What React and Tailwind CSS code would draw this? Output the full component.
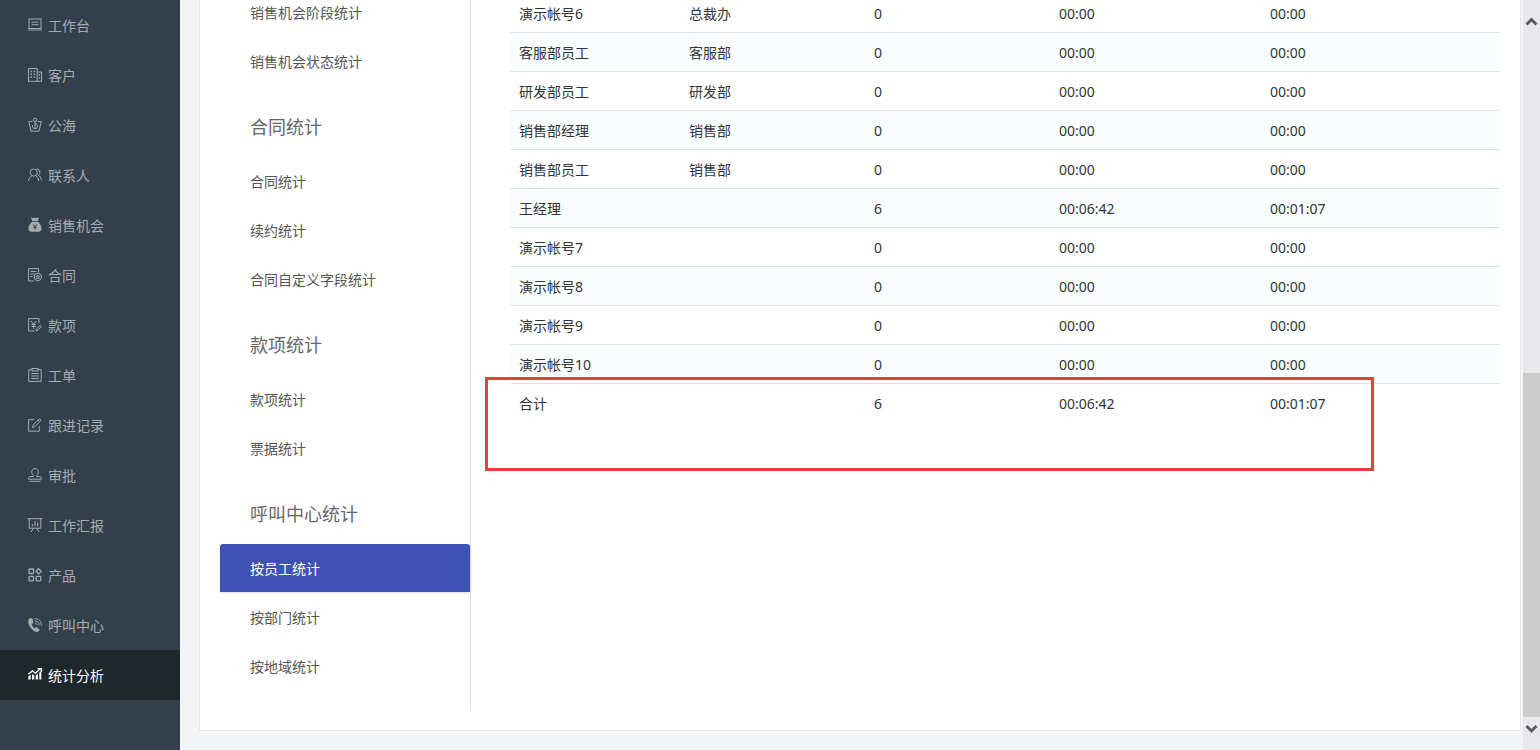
import React from "react";
import clsx from "clsx";

// Sidebar icons, all drawn on a 14x14 grid
const icons = {
  desk: (
    <>
      <rect x="1" y="1" width="12" height="9.5" />
      <path d="M3.5 4.2h7M3.5 6.7h7M0 12h14" />
    </>
  ),
  building: (
    <>
      <path d="M.5 13V.5h8.700V13M9.200 4h4.300v9M0 13.300h14" />
      <path d="M2.500 3.500h1.500M5.700 3.500h1.500M2.500 6.200h1.500M5.700 6.200h1.500M2.500 9h1.500M5.700 9h1.500M10.700 7h1.300M10.700 10h1.300" strokeWidth="1.400" />
    </>
  ),
  sea: (
    <>
      <path d="M4.300 3.500H.700L3 13.200h8L13.300 3.500H9.700" />
      <circle cx="7" cy="1.800" r="1.700" />
      <path d="M7 3.800v6.700M4.700 7v2.200c0 .8.800 1.300 2.300 1.300s2.300-.5 2.300-1.300V7M7 6h2.300" />
    </>
  ),
  contact: (
    <>
      <circle cx="5.700" cy="4.500" r="3.600" />
      <path d="M.6 13c.2-3 1.700-4.500 3.200-5M7.700 8c1.500.6 2.800 2 3 5M8.700 1c2 .1 3.200 1.500 3.200 3.300 0 1.500-.8 2.600-1.700 3 1.600.7 2.900 2.200 3.200 4.700" />
    </>
  ),
  bag: (
    <>
      <path
        d="M3 0c1-.5 2 .3 2.700 0C6.500-.4 7.500-.4 8.200 0c.8.200 1.800-.5 2.800 0L9.700 3H4.300ZM4.300 3.800h5.400c2.200 1.500 3.800 4 3.800 6.600 0 2.200-1.200 3.300-3 3.300h-7c-1.800 0-3-1.100-3-3.300 0-2.600 1.600-5.100 3.800-6.600Z"
        fill="currentColor"
        stroke="none"
      />
      <path d="m5 6.300 2 2.400 2-2.400M7 8.700v3M5.300 9.300h3.400" stroke="#333f4b" />
    </>
  ),
  contract: (
    <>
      <path d="M5.500 13H.6V.6h10v3.700M2.500 3.500h6M2.500 6h4M2.500 8.500h2" />
      <circle cx="9.800" cy="9" r="3.700" />
      <path d="m9.800 7.200.6 1.200 1.300.2-1 .9.300 1.300-1.200-.6-1.200.6.300-1.300-1-.9 1.300-.2Z" />
    </>
  ),
  payment: (
    <>
      <path d="M11 5V.6H.6V13h6M3 3l2.600 3.200L8.300 3M5.600 6.200v4.600M3.500 6.500h4.300M3.500 8.500h4.300" />
      <path d="m8 13 .4-2 4-3.800 1.200 1.300-4 3.900Z" />
    </>
  ),
  ticket: (
    <>
      <path d="M4 1.700H.8v11.700h12.400V1.700H10" />
      <rect x="4" y=".5" width="6" height="2.500" />
      <path d="M3.300 5.500h7.400M3.300 8h7.400M3.300 10.500h7.400" />
    </>
  ),
  record: (
    <>
      <path d="M6.500 1.700H.6v11.500h10.700V8" />
      <path d="m4.500 9.500.7-2.500L11.500.7l1.700 1.500-6.400 6.500ZM10 2.200l1.600 1.500" />
    </>
  ),
  stamp: (
    <>
      <path d="M5.500 8.500c.3-1.500-1.800-2.200-1.800-4.500C3.700 2 5 .6 7 .6S10.300 2 10.300 4c0 2.300-2.100 3-1.800 4.500h3.300c1 0 1.600.6 1.600 1.500v1.200H.6V10c0-.9.600-1.500 1.600-1.500Z" />
      <path d="M1.500 13.300h11" />
    </>
  ),
  board: (
    <>
      <path d="M-.5.700h15M1.200.7v9.500h11.600V.7M5.300 10.200 3 14M8.700 10.200 11 14" />
      <path d="M4.300 6v2.500M7 3v5.500M9.700 4.700v3.800" />
    </>
  ),
  product: (
    <g strokeWidth="1.300">
      <rect x="1" y="1" width="4.500" height="4.500" rx=".5" />
      <rect x="1" y="8.300" width="4.500" height="4.500" rx=".5" />
      <rect x="8.300" y="8.300" width="4.500" height="4.500" rx=".5" />
      <path d="m10.600.7 2.700 2.600-2.700 2.600L8 3.300Z" />
    </g>
  ),
  call: (
    <>
      <path
        d="M2.300.3C1 .7.300 2 .4 3.800c.3 4.500 4 9 7.800 9.900 1.300.3 2.500-.3 3-1.500.2-.4 0-.8-.3-1.100L8.600 9.600c-.4-.3-.9-.2-1.200.1l-.8.800C4.900 9.400 3.900 7.700 3.500 5.800l1.200-.5c.4-.2.6-.6.500-1L4.400 1C4.200.3 3.400 0 2.300.300Z"
        fill="currentColor"
        stroke="currentColor"
        strokeWidth=".4"
      />
      <path d="M6.700.700c4.200-.2 6.800 2.600 6.600 7M6.800 2.900c2.700-.1 4.500 1.600 4.300 4.400M7 5.100c1.300 0 2 .8 1.900 2" />
    </>
  ),
  chart: (
    <>
      <path
        d="M.3 8.500 2.700 6.500v5H.3ZM4 6l2.300 1.600v3.900H4ZM7.700 7.600 10 5.500v6H7.700ZM11.300 4.500l2-1.500v8.500h-2Z"
        fill="currentColor"
        stroke="none"
      />
      <path d="m.3 6.300 4.200-3.300 3 2.200L12.300.8M9.500.6h3.900v3.400" strokeWidth="1.400" />
    </>
  ),
};

const menu = [
  { label: "工作台", icon: "desk" },
  { label: "客户", icon: "building" },
  { label: "公海", icon: "sea" },
  { label: "联系人", icon: "contact" },
  { label: "销售机会", icon: "bag" },
  { label: "合同", icon: "contract" },
  { label: "款项", icon: "payment" },
  { label: "工单", icon: "ticket" },
  { label: "跟进记录", icon: "record" },
  { label: "审批", icon: "stamp" },
  { label: "工作汇报", icon: "board" },
  { label: "产品", icon: "product" },
  { label: "呼叫中心", icon: "call" },
  { label: "统计分析", icon: "chart", active: true },
];

const groups = [
  { items: ["销售机会阶段统计", "销售机会状态统计"] },
  { title: "合同统计", items: ["合同统计", "续约统计", "合同自定义字段统计"] },
  { title: "款项统计", items: ["款项统计", "票据统计"] },
  { title: "呼叫中心统计", items: ["按员工统计", "按部门统计", "按地域统计"] },
];

const rows = [
  ["演示帐号6", "总裁办", "0", "00:00", "00:00"],
  ["客服部员工", "客服部", "0", "00:00", "00:00"],
  ["研发部员工", "研发部", "0", "00:00", "00:00"],
  ["销售部经理", "销售部", "0", "00:00", "00:00"],
  ["销售部员工", "销售部", "0", "00:00", "00:00"],
  ["王经理", "", "6", "00:06:42", "00:01:07"],
  ["演示帐号7", "", "0", "00:00", "00:00"],
  ["演示帐号8", "", "0", "00:00", "00:00"],
  ["演示帐号9", "", "0", "00:00", "00:00"],
  ["演示帐号10", "", "0", "00:00", "00:00"],
  ["合计", "", "6", "00:06:42", "00:01:07"],
];

function Sidebar() {
  return (
    <nav className="w-[180px] shrink-0 bg-[#333f4b]">
      {menu.map((item) => (
        <a
          key={item.label}
          href="#"
          className={clsx(
            "flex h-[50px] items-center gap-1.5 pt-0.5 pl-7",
            item.active ? "bg-[#1e282a] text-white" : "text-[#a5acb0]"
          )}
        >
          <svg
            viewBox="0 0 14 14"
            className="mb-0.5 size-3.5 shrink-0 overflow-visible"
            fill="none"
            stroke="currentColor"
            strokeWidth="1"
            aria-hidden="true"
          >
            {icons[item.icon]}
          </svg>
          {item.label}
        </a>
      ))}
    </nav>
  );
}

function StatsNav() {
  return (
    <nav className="w-[251px] shrink-0 border-r border-[#dcdde0] pb-[19px]">
      {groups.map((group, i) => (
        <section key={i}>
          {group.title && (
            <h2 className="flex h-[71px] items-center pt-2.5 pl-[30px] text-lg text-[#666]">{group.title}</h2>
          )}
          {group.items.map((label) => (
            <a
              key={label}
              href="#"
              className={clsx(
                "mb-px flex h-12 items-center pt-0.5 pl-[30px]",
                label === "按员工统计"
                  ? "rounded-t-[3px] bg-[#3f51b5] text-white shadow-sm"
                  : "text-[#555]"
              )}
            >
              {label}
            </a>
          ))}
        </section>
      ))}
    </nav>
  );
}

function StatsTable() {
  return (
    <div className="relative">
      <table className="w-full table-fixed text-left text-[#333]">
        <colgroup>
          <col className="w-[170px]" />
          <col className="w-[185px]" />
          <col className="w-[185px]" />
          <col className="w-[211px]" />
          <col />
        </colgroup>
        <tbody>
          {rows.map((row) => (
            <tr key={row[0]} className="h-[39px] border-t border-[#dfe3e5] first:border-transparent even:bg-[#fafdfd]">
              {row.map((cell, i) => (
                <td key={i} className="pt-0.5 pr-2 pl-[9px]">
                  {cell}
                </td>
              ))}
            </tr>
          ))}
        </tbody>
      </table>
      {/* frame around the totals row */}
      <div className="pointer-events-none absolute -bottom-12 -left-[25px] h-[94px] w-[889px] border-3 border-[#e93f3f]" />
    </div>
  );
}

// Static scroll bar at the window edge
function ScrollBar() {
  return (
    <div className="flex w-[17px] shrink-0 flex-col bg-[#e8e8ea]" aria-hidden="true">
      <svg viewBox="0 0 17 42" className="h-[42px] w-full" fill="none" stroke="#5c5c5e" strokeWidth="3">
        <path d="m3.500 24.500 5-5 5 5" />
      </svg>
      <div className="flex-[331]" />
      <div className="flex-[344] bg-[#cccccc]" />
      <svg viewBox="0 0 17 33" className="h-[33px] w-full" fill="none" stroke="#5c5c5e" strokeWidth="3">
        <path d="m3.500 9 5 5 5-5" />
      </svg>
    </div>
  );
}

export default function App() {
  return (
    <div className="flex h-screen overflow-hidden bg-[#f1f3f5] font-['Noto_Sans','Noto_Sans_CJK_SC',sans-serif] text-sm">
      <Sidebar />
      <main className="flex min-w-0 flex-1 flex-col justify-end pr-0.5 pb-[19px] pl-[19px]">
        <div className="flex border border-[#e6e8ea] bg-white pr-5 pb-5 pl-5">
          <StatsNav />
          <div className="min-w-0 flex-1 pt-[5px] pl-[39px]">
            <StatsTable />
          </div>
        </div>
      </main>
      <ScrollBar />
    </div>
  );
}
